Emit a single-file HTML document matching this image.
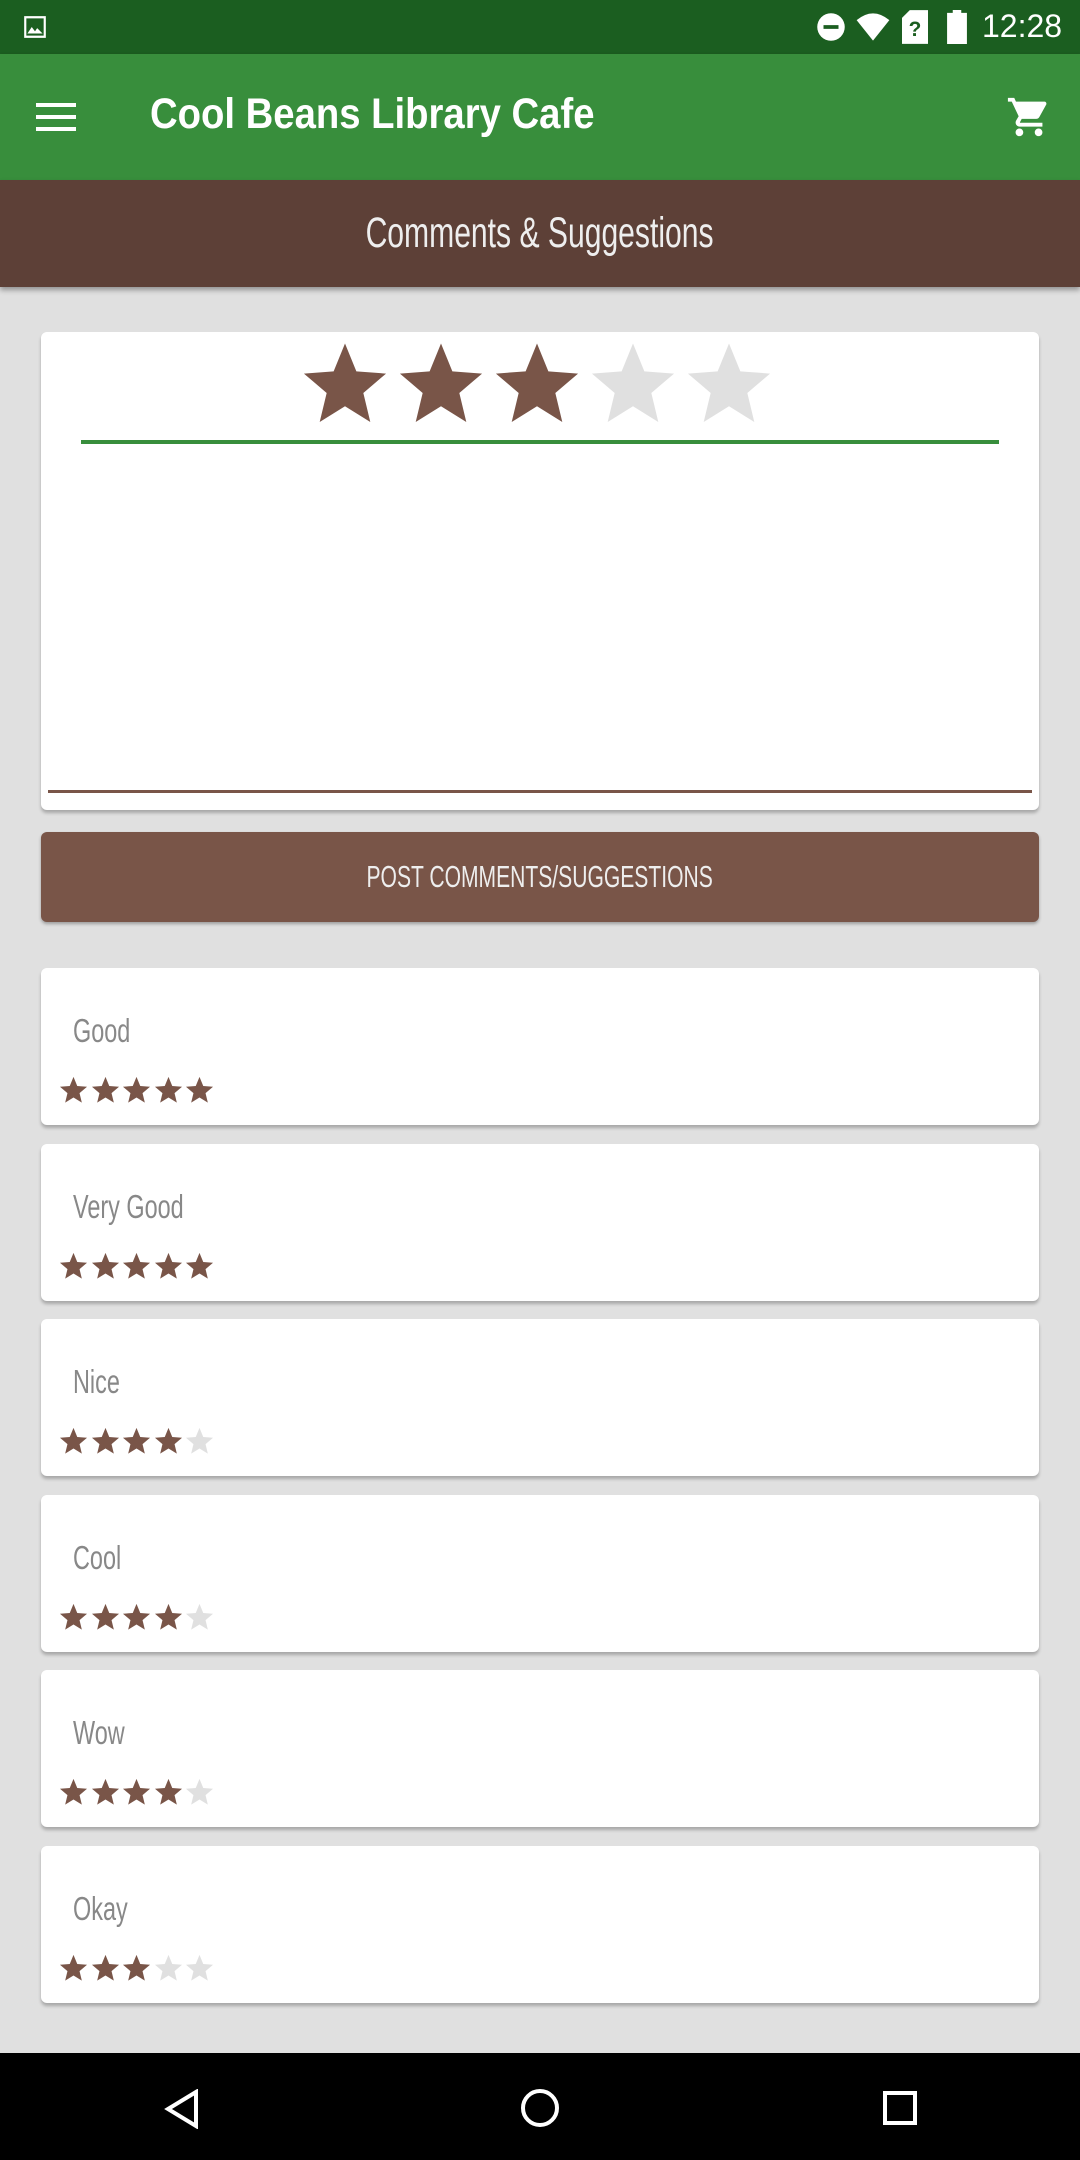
<!DOCTYPE html>
<html><head><meta charset="utf-8"><style>
*{margin:0;padding:0;box-sizing:border-box}
body{width:1080px;height:2160px;background:#e0e0e0;font-family:"Liberation Sans",sans-serif;position:relative;overflow:hidden}
.sq{display:inline-block;white-space:nowrap}
#sb{position:absolute;top:0;left:0;width:1080px;height:54px;background:#1b5e20;color:#fff}
#tb{position:absolute;top:54px;left:0;width:1080px;height:126px;background:#388e3c;box-shadow:0 2px 4px rgba(0,0,0,.3)}
#hd{position:absolute;top:180px;left:0;width:1080px;height:107px;background:#5d4037;color:#eee;font-size:43px;text-align:center;line-height:107px;box-shadow:0 3px 5px rgba(0,0,0,.35)}
.card{position:absolute;left:41px;width:998px;background:#fff;border-radius:6px;box-shadow:0 3px 3px rgba(0,0,0,.25)}
#btn{position:absolute;left:41px;top:832px;width:998px;height:90px;background:#795548;border-radius:6px;color:#eee;font-size:31px;text-align:center;line-height:90px;box-shadow:0 2px 3px rgba(0,0,0,.3)}
.t{position:absolute;left:32px;top:44px;font-size:33px;color:#888;transform:scaleX(.71);transform-origin:left center;white-space:nowrap}
.s{position:absolute;left:18px;top:107px;display:flex;gap:2.5px}
#nav{position:absolute;top:2053px;left:0;width:1080px;height:107px;background:#000}
</style></head><body>
<svg width="0" height="0" style="position:absolute"><defs><symbol id="st" viewBox="0 0 24 24"><path d="M12 1.5l3.1 7.6 8.1.6-6.2 5.3 1.9 7.9L12 18.6 5.1 22.9 7 15 .8 9.7l8.1-.6z"/></symbol></defs></svg>
<div id="sb">
<svg style="position:absolute;left:22px;top:14px" width="26" height="26" viewBox="0 0 24 24" fill="#fff"><path d="M2 2h20v20H2zM4 4v16h16V4zM5 18l4-6 3 4 2-3 5 5z"/></svg>
<svg style="position:absolute;left:816px;top:12px" width="30" height="30" viewBox="0 0 24 24"><circle cx="12" cy="12" r="11" fill="#fff"/><rect x="6" y="10.5" width="12" height="3" fill="#1b5e20"/></svg>
<svg style="position:absolute;left:856px;top:12px" width="34" height="30" viewBox="0 0 24 22" fill="#fff"><path d="M12 21L0 6Q12-4 24 6z"/></svg>
<svg style="position:absolute;left:902px;top:10px" width="26" height="34" viewBox="0 0 20 26" fill="#fff"><path d="M6 0h14v26H0V6z"/><text x="10" y="20" font-size="16" text-anchor="middle" fill="#1b5e20" font-family="Liberation Sans" font-weight="bold">?</text></svg>
<svg style="position:absolute;left:946px;top:10px" width="22" height="34" viewBox="0 0 14 24" fill="#fff"><path d="M4 0h6v2h4v22H0V2h4z"/></svg>
<div style="position:absolute;left:982px;top:8px;font-size:32px">12:28</div>
</div>
<div id="tb">
<svg style="position:absolute;left:36px;top:45px" width="40" height="36" viewBox="0 0 40 36" fill="#fff"><rect y="4" width="40" height="4"/><rect y="16" width="40" height="4"/><rect y="28" width="40" height="4"/></svg>
<div style="position:absolute;left:150px;top:36px;font-size:43px;color:#fff;font-weight:bold;transform:scaleX(.89);transform-origin:left center;white-space:nowrap">Cool Beans Library Cafe</div>
<svg style="position:absolute;left:1006px;top:40px" width="46" height="46" viewBox="0 0 24 24" fill="#fff"><path d="M7 18c-1.1 0-2 .9-2 2s.9 2 2 2 2-.9 2-2-.9-2-2-2zM1 2v2h2l3.6 7.6-1.4 2.4c-.6 1.3.3 3 1.8 3h12v-2H7.4c-.1 0-.2-.1-.1-.3l.9-1.7h7.5c.8 0 1.4-.4 1.7-1l3.6-6.5c.3-.7-.2-1.5-.9-1.5H5.2l-.9-2zM17 18c-1.1 0-2 .9-2 2s.9 2 2 2 2-.9 2-2-.9-2-2-2z"/></svg>
</div>
<div id="hd"><span class="sq" style="transform:scaleX(.7)">Comments &amp; Suggestions</span></div>
<div class="card" style="top:332px;height:478px">
<div style="position:absolute;left:260px;top:6px;display:flex;gap:8px">
<svg width="88" height="88" fill="#795548"><use href="#st"/></svg><svg width="88" height="88" fill="#795548"><use href="#st"/></svg><svg width="88" height="88" fill="#795548"><use href="#st"/></svg><svg width="88" height="88" fill="#e0e0e0"><use href="#st"/></svg><svg width="88" height="88" fill="#e0e0e0"><use href="#st"/></svg>
</div>
<div style="position:absolute;left:40px;top:108px;width:918px;height:4px;background:#388e3c"></div>
<div style="position:absolute;left:7px;top:458px;width:984px;height:3px;background:#795548"></div>
</div>
<div id="btn"><span class="sq" style="transform:scaleX(.68)">POST COMMENTS/SUGGESTIONS</span></div>
<div class="card" style="top:968px;height:157px"><div class="t">Good</div><div class="s"></div></div>
<div class="card" style="top:1144px;height:157px"><div class="t">Very Good</div><div class="s"></div></div>
<div class="card" style="top:1319px;height:157px"><div class="t">Nice</div><div class="s"></div></div>
<div class="card" style="top:1495px;height:157px"><div class="t">Cool</div><div class="s"></div></div>
<div class="card" style="top:1670px;height:157px"><div class="t">Wow</div><div class="s"></div></div>
<div class="card" style="top:1846px;height:157px"><div class="t">Okay</div><div class="s"></div></div>
<div id="nav">
<svg style="position:absolute;left:164px;top:36px" width="36" height="40" viewBox="0 0 36 40" fill="none" stroke="#fff" stroke-width="4"><path d="M32 3L4 20l28 17z"/></svg>
<svg style="position:absolute;left:519px;top:34px" width="42" height="42" viewBox="0 0 42 42" fill="none" stroke="#fff" stroke-width="4"><circle cx="21" cy="21" r="17"/></svg>
<svg style="position:absolute;left:882px;top:37px" width="36" height="36" viewBox="0 0 36 36" fill="none" stroke="#fff" stroke-width="4"><rect x="3" y="3" width="30" height="30"/></svg>
</div>
<script>
var r=[5,5,4,4,4,3];document.querySelectorAll('.s').forEach(function(e,i){var h='';for(var k=0;k<5;k++)h+='<svg width="29" height="29" fill="'+(k<r[i]?'#795548':'#e0e0e0')+'"><use href="#st"/></svg>';e.innerHTML=h;});
</script>
</body></html>
